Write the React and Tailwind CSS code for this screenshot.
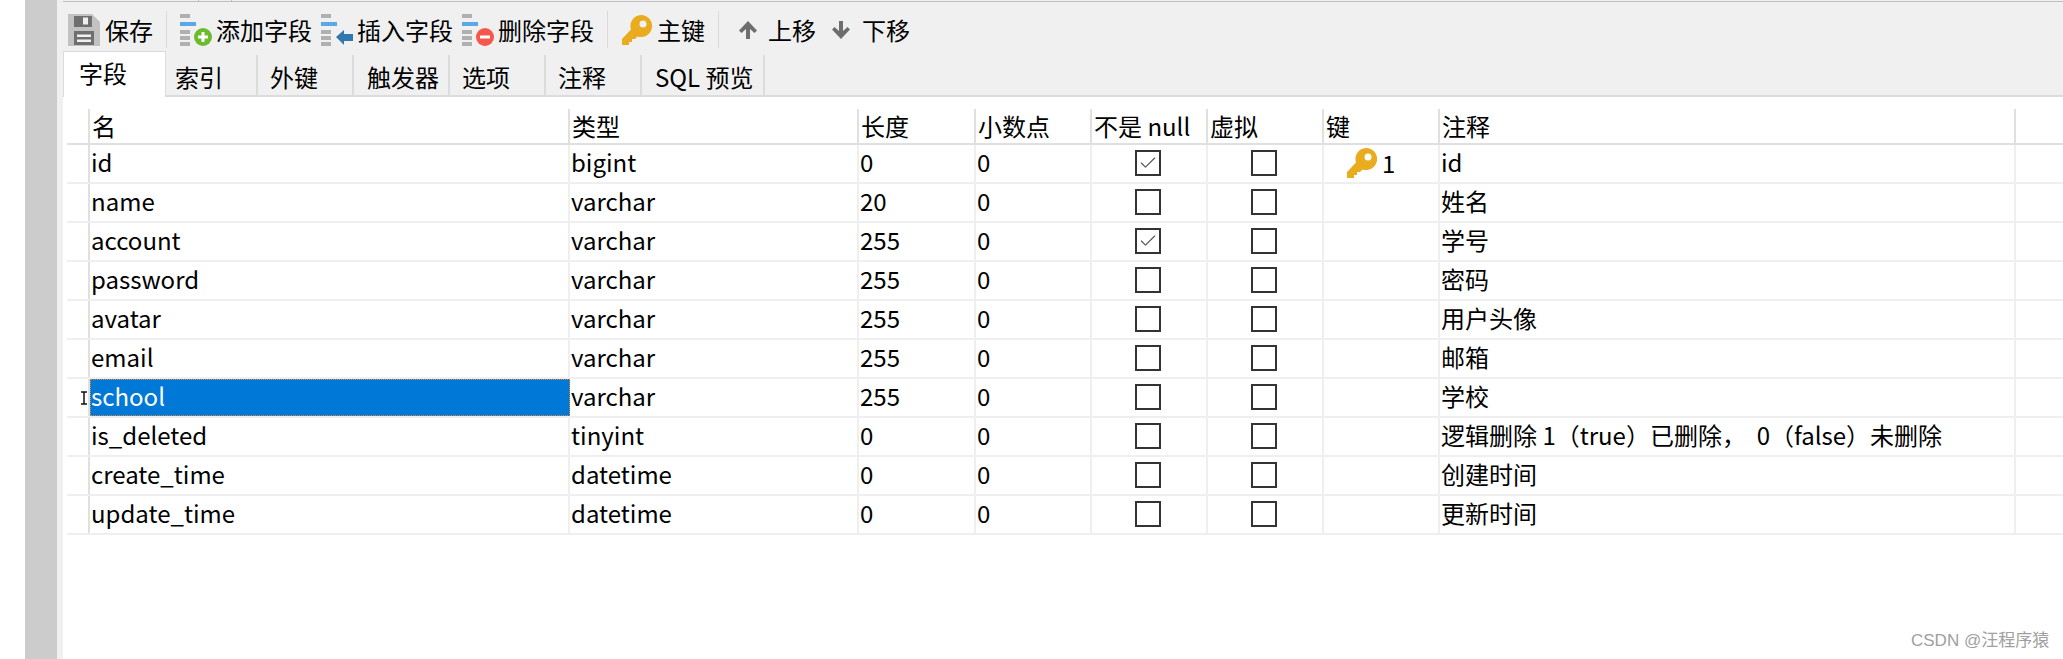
import { Check } from "lucide-react";

const FONT = "font-['Noto_Sans_CJK_SC','Noto_Sans',sans-serif]";

const ROWS = [
  { name: "id", type: "bigint", len: "0", notNull: true, pk: true, note: "id" },
  { name: "name", type: "varchar", len: "20", note: "姓名" },
  { name: "account", type: "varchar", len: "255", notNull: true, note: "学号" },
  { name: "password", type: "varchar", len: "255", note: "密码" },
  { name: "avatar", type: "varchar", len: "255", note: "用户头像" },
  { name: "email", type: "varchar", len: "255", note: "邮箱" },
  { name: "school", type: "varchar", len: "255", selected: true, note: "学校" },
  { name: "is_deleted", type: "tinyint", len: "0", note: "逻辑删除 1（true）已删除， \u00a00（false）未删除" },
  { name: "create_time", type: "datetime", len: "0", note: "创建时间" },
  { name: "update_time", type: "datetime", len: "0", note: "更新时间" },
];

const TABS = [
  { label: "索引", w: "w-[92px] pl-[9px]" },
  { label: "外键", w: "w-[96px] pl-[12px]" },
  { label: "触发器", w: "w-[96px] pl-[13px]" },
  { label: "选项", w: "w-[96px] pl-[12px]" },
  { label: "注释", w: "w-[96px] pl-[12px]" },
  { label: "SQL 预览", w: "w-[123px] pl-[13px]" },
];

function SaveIcon() {
  return (
    <svg width="32" height="32" viewBox="0 0 32 32" className="shrink-0">
      <path d="M0 0H24L32 8V32H0Z" fill="#c2c2c2" />
      <rect x="6" y="2" width="18" height="11" fill="#6f6f6f" />
      <rect x="15" y="3.500" width="5" height="7" fill="#f0f0f0" />
      <rect x="6" y="17" width="20" height="14" fill="#6f6f6f" />
      <rect x="9" y="20.500" width="14" height="2.500" fill="#f0f0f0" />
      <rect x="9" y="25.500" width="14" height="2.500" fill="#f0f0f0" />
    </svg>
  );
}

function FieldBars() {
  return (
    <>
      <rect x="0" y="0" width="10" height="4" fill="#b0b0b0" />
      <rect x="0" y="8" width="16" height="4" fill="#5aa9e6" />
      <rect x="0" y="16" width="10" height="4" fill="#b0b0b0" />
      <rect x="0" y="22" width="10" height="4" fill="#b0b0b0" />
      <rect x="0" y="28" width="10" height="4" fill="#b0b0b0" />
    </>
  );
}

function AddIcon() {
  return (
    <svg width="32" height="32" viewBox="0 0 32 32" className="shrink-0">
      <FieldBars />
      <circle cx="23" cy="23" r="9" fill="#6cbb2c" />
      <path d="M23 18V28M18 23H28" stroke="#fff" strokeWidth="3" />
    </svg>
  );
}

function InsertIcon() {
  return (
    <svg width="32" height="32" viewBox="0 0 32 32" className="shrink-0">
      <FieldBars />
      <path d="M15 23L23 16V20H32V27H23V31Z" fill="#3277ae" />
    </svg>
  );
}

function DeleteIcon() {
  return (
    <svg width="32" height="32" viewBox="0 0 32 32" className="shrink-0">
      <FieldBars />
      <circle cx="23" cy="23" r="9" fill="#f5574c" />
      <rect x="18" y="21.500" width="10" height="3" fill="#fff" />
    </svg>
  );
}

function KeyIcon({ size = 30 }) {
  return (
    <svg width={size} height={size} viewBox="0 0 30 30" className="shrink-0">
      <path
        fillRule="evenodd"
        d="M19 0A11 11 0 1 1 15.500 21.400L13 24H10V27H7V30H0V24L9 14.500A11 11 0 0 1 19 0ZM21 5.500A3.500 3.500 0 1 0 21 12.500A3.500 3.500 0 1 0 21 5.500Z"
        fill="#e9ac1e"
      />
    </svg>
  );
}

function ArrowIcon({ down }) {
  return (
    <svg width="20" height="20" viewBox="0 0 20 20" className={down ? "rotate-180 shrink-0" : "shrink-0"}>
      <path d="M10 1L19 10.500L16.500 13L12 9V19H8V9L3.500 13L1 10.500Z" fill="#6e6e6e" />
    </svg>
  );
}

function Separator() {
  return <div className="w-px h-[37px] bg-[#d9d9d9] shrink-0" />;
}

function CheckBox({ checked }) {
  return (
    <div className="w-[26px] h-[26px] border-2 border-[#333] bg-white flex items-center justify-center">
      {checked && <Check size={20} strokeWidth={1.4} className="text-[#555]" />}
    </div>
  );
}

function HeadCell({ className, children }) {
  return <div className={`${className} h-full border-r-2 border-[#e0e0e0] pl-[2px] flex items-center`}>{children}</div>;
}

function Row({ row }) {
  const cell = "h-full border-r-2 border-[#efefef] flex items-center";
  const text = `${cell} pl-[1px] pb-[3px]`;
  return (
    <div className="flex h-[39px] border-b-2 border-[#efefef] text-black">
      <div className="w-[23px] h-full border-r-2 border-[#e0e0e0]" />
      {row.selected ? (
        <div className="w-[480px] h-full bg-[#0078d7] text-white pl-[1px] pb-[3px] flex items-center outline-1 -outline-offset-1 outline-dotted outline-[#d9893a]">
          {row.name}
        </div>
      ) : (
        <div className={`w-[480px] ${text}`}>{row.name}</div>
      )}
      <div className={`w-[289px] ${text}`}>{row.type}</div>
      <div className={`w-[117px] ${text}`}>{row.len}</div>
      <div className={`w-[116px] ${text}`}>0</div>
      <div className={`w-[116px] ${cell} justify-center pr-[2px] pb-[2px]`}>
        <CheckBox checked={row.notNull} />
      </div>
      <div className={`w-[116px] ${cell} justify-center pr-[2px] pb-[2px]`}>
        <CheckBox />
      </div>
      <div className={`w-[116px] ${cell} pl-[23px] pb-[2px] gap-[5px]`}>
        {row.pk && (
          <>
            <KeyIcon />
            <span>1</span>
          </>
        )}
      </div>
      <div className={`w-[576px] ${text} whitespace-nowrap`}>{row.note}</div>
    </div>
  );
}

export default function App() {
  return (
    <div className={`relative flex h-[659px] bg-white overflow-hidden text-[24px] leading-none text-black ${FONT}`}>
      <div className="w-[25px]" />
      <div className="w-[32px] bg-[#cccccc]" />

      <div className="flex-1 flex flex-col">
        {/* Toolbar */}
        <div className="h-[55px] bg-[#f0f0f0] pl-[6px]">
          <div className="h-px flex gap-[32px] pl-[135px]">
            <div className="w-px bg-[#bdbdbd]" />
            <div className="w-px bg-[#bdbdbd]" />
          </div>
          <div className="h-px bg-[#bdbdbd]" />
          <div className="flex items-center h-[51px] mt-[2px] whitespace-nowrap">
            <div className="w-[5px]" />
            <SaveIcon />
            <span className="ml-[5px] w-[48px]">保存</span>
            <div className="w-[13px]" />
            <Separator />
            <div className="w-[13px]" />
            <AddIcon />
            <span className="ml-[4px] w-[96px]">添加字段</span>
            <div className="w-[9px]" />
            <InsertIcon />
            <span className="ml-[4px] w-[96px]">插入字段</span>
            <div className="w-[9px]" />
            <DeleteIcon />
            <span className="ml-[4px] w-[96px]">删除字段</span>
            <div className="w-[13px]" />
            <Separator />
            <div className="w-[14px]" />
            <KeyIcon />
            <span className="ml-[5px] w-[48px]">主键</span>
            <div className="w-[13px]" />
            <Separator />
            <div className="w-[19px]" />
            <ArrowIcon />
            <span className="ml-[10px] w-[48px]">上移</span>
            <div className="w-[15px]" />
            <ArrowIcon down />
            <span className="ml-[11px]">下移</span>
          </div>
        </div>

        {/* Tabs */}
        <div className="flex-1 bg-[#f0f0f0] pl-[6px] flex flex-col">
          <div className="flex h-[42px] border-b-2 border-[#dcdcdc]">
            <div className="w-[103px] h-[46px] -mt-[4px] bg-white border border-b-0 border-[#dcdcdc] flex items-center pl-[15px] pb-[4px] relative">
              字段
            </div>
            {TABS.map((t) => (
              <div key={t.label} className={`${t.w} h-full border-r-2 border-[#dcdcdc] flex items-center pt-[3px] whitespace-nowrap`}>
                {t.label}
              </div>
            ))}
          </div>

          {/* Fields grid */}
          <div className="flex-1 bg-white pt-[12px] pl-[4px]">
            <div className="flex h-[36px] border-b-2 border-[#e0e0e0]">
              <div className="w-[23px] h-full border-r-2 border-[#e0e0e0]" />
              <HeadCell className="w-[480px]">名</HeadCell>
              <HeadCell className="w-[289px]">类型</HeadCell>
              <HeadCell className="w-[117px]">长度</HeadCell>
              <HeadCell className="w-[116px]">小数点</HeadCell>
              <HeadCell className="w-[116px]">不是 null</HeadCell>
              <HeadCell className="w-[116px]">虚拟</HeadCell>
              <HeadCell className="w-[116px]">键</HeadCell>
              <HeadCell className="w-[576px]">注释</HeadCell>
            </div>
            {ROWS.map((row) => (
              <Row key={row.name} row={row} />
            ))}
          </div>
        </div>
      </div>

      {/* I-beam mouse pointer */}
      <svg width="8" height="14" viewBox="0 0 8 14" className="absolute left-[80px] top-[391px]">
        <path d="M1 1H7M1 13H7M4 1V13" stroke="#111" strokeWidth="1.5" fill="none" />
      </svg>

      <div className="absolute left-[1911px] top-[631px] font-['Liberation_Sans','Noto_Sans_CJK_SC',sans-serif] text-[17px] leading-[20px] text-[#a0a0a0] whitespace-nowrap">CSDN @汪程序猿</div>
    </div>
  );
}
